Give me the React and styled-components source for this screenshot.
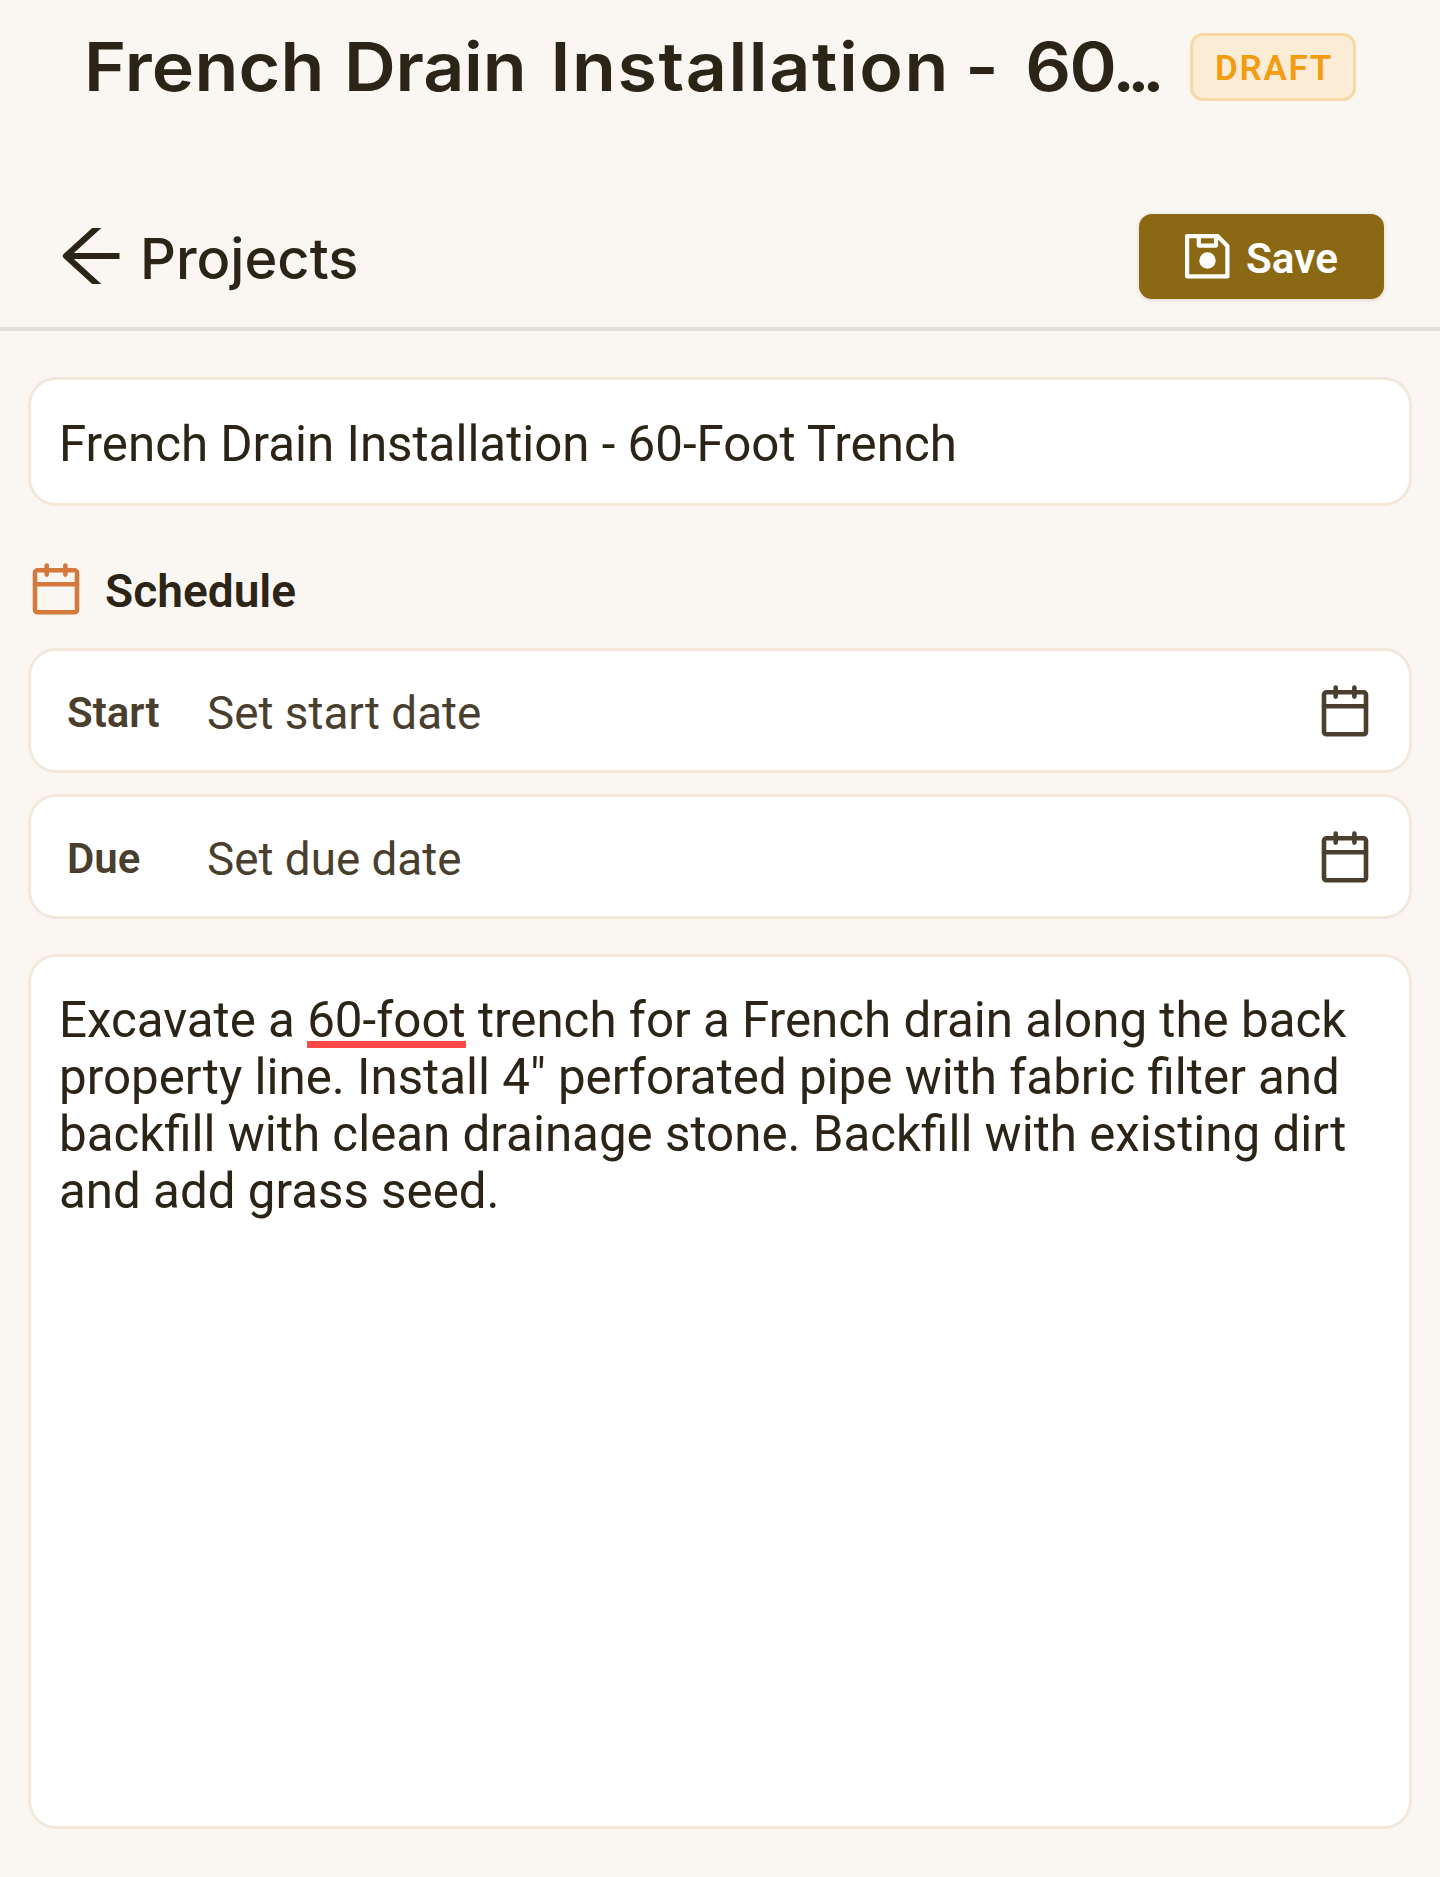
import React from "react";
import styled, { createGlobalStyle } from "styled-components";

const GlobalStyle = createGlobalStyle`
  *, *::before, *::after { box-sizing: border-box; }
  body { margin: 0; background: #faf7f2; }
`;

const Screen = styled.main`
  display: flex;
  flex-direction: column;
  width: 1440px;
  height: 1877px;
  overflow: hidden;
  background: #faf7f2;
  color: #2c2416;
  font-family: Roboto, "Liberation Sans", sans-serif;
`;

const TitleBar = styled.header`
  display: flex;
  align-items: center;
  justify-content: space-between;
  height: 134px;
  padding: 0 84px 0 84px;
`;

const Title = styled.h1`
  display: flex;
  margin: 0;
  font: 600 67px/80px Inter, sans-serif;
  white-space: pre;
  transform: scaleX(1.07);
  transform-origin: 0 50%;
`;

const Word = styled.span`
  width: ${(p) => p.$width}px;
  letter-spacing: ${(p) => p.$tracking}px;
  word-spacing: ${(p) => p.$gap || 0}px;
`;

const Badge = styled.span`
  display: flex;
  align-items: center;
  justify-content: center;
  width: 166px;
  height: 68px;
  padding: 3px 0 0 2px;
  border: 3px solid #f7d9a6;
  border-radius: 13px;
  background: #faecd5;
  color: #f39c12;
  font-size: 35px;
  font-weight: 600;
  line-height: 40px;
  letter-spacing: 1.7px;
`;

const NavBar = styled.nav`
  display: flex;
  align-items: center;
  justify-content: space-between;
  height: 197px;
  padding: 49px 56px 0 62px;
  border-bottom: 4px solid #e2dfd9;
`;

const BackLink = styled.div`
  display: flex;
  align-items: center;
  gap: 20px;
  padding-top: 1px;
  font: 500 56px/66px Inter, sans-serif;
  span { padding-top: 6px; }
`;

const SaveButton = styled.button`
  display: flex;
  align-items: center;
  gap: 16px;
  width: 245px;
  height: 85px;
  margin-top: 3px;
  padding: 0 0 0 46px;
  border: 0;
  border-radius: 13px;
  background: #8b6914;
  box-shadow: 0 1px 5px rgba(70, 50, 20, 0.18);
  color: #fff;
  font: 600 42.3px/50px Roboto, sans-serif;
  span { padding-top: 4px; }
`;

const Form = styled.section`
  display: flex;
  flex-direction: column;
  padding: 46px 28px 0;
`;

const Field = styled.div`
  display: flex;
  align-items: center;
  height: ${(p) => p.$height}px;
  padding: ${(p) => p.$padding};
  margin-bottom: ${(p) => p.$after || 0}px;
  border: 3px solid #f3e8da;
  border-radius: 28px;
  background: #fff;
`;

const NameText = styled.span`
  font-size: 49.25px;
  line-height: 57px;
  white-space: nowrap;
`;

const SectionHeading = styled.h2`
  display: flex;
  align-items: center;
  gap: 25px;
  height: 52px;
  margin: 57px 0 33px;
  padding-left: 4px;
  font-size: 46.1px;
  font-weight: 600;
  line-height: 54px;
  span { padding-top: 4px; }
`;

const FieldLabel = styled.span`
  width: 140px;
  padding-top: 4px;
  color: #4a3f2f;
  font-size: 42px;
  font-weight: 600;
  line-height: 50px;
`;

const FieldValue = styled.span`
  flex: 1;
  padding-top: 6px;
  color: #4a3f2f;
  font-size: 45.8px;
  line-height: 54px;
`;

const Description = styled.div`
  height: 875px;
  padding: 35px 28px;
  border: 3px solid #f3e8da;
  border-radius: 28px;
  background: #fff;
  font-size: 49.3px;
  line-height: 57px;
`;

const Line = styled.div`
  white-space: pre;
`;

const Misspelled = styled.span`
  background: linear-gradient(#ff4845, #ff4845) 0 calc(100% - 1.5px) / 100% 7px no-repeat;
`;

const Icon = styled.svg`
  display: block;
  flex: none;
  fill: none;
  stroke: currentColor;
`;

const ArrowLeft = () => (
  <Icon width="58" height="56" viewBox="0 0 58 56" strokeWidth="6.2">
    <path d="M3.5 28H57.5M37 -2L4 28L37 58" strokeLinejoin="round" />
  </Icon>
);

const SaveIcon = () => (
  <Icon width="45" height="45" viewBox="0 0 45 45" strokeWidth="4.2" strokeLinejoin="round">
    <path d="M2.1 2.1H32.5L42.4 12V42.4H2.1ZM13.8 2.1V11.6H31V2.1" />
    <circle cx="22.5" cy="26.5" r="8.2" fill="currentColor" stroke="none" />
  </Icon>
);

const CalendarIcon = ({ color }) => (
  <Icon width="48" height="52" viewBox="0 0 48 52" strokeWidth="4.6" strokeLinecap="round" color={color}>
    <rect x="3" y="7.3" width="42" height="42" rx="2.4" />
    <path d="M3 21.3H45M14.7 2.5V11.6M33.4 2.5V11.6" />
  </Icon>
);

const words = [
  { text: "French ", width: 243, tracking: 0.2 },
  { text: "Drain ", width: 193, tracking: -0.2 },
  { text: "Installation ", width: 387.5, tracking: 1.5 },
  { text: "- 60", width: 137.5, tracking: -1.5, gap: 11 },
  { text: "...", width: 46, tracking: -7.5 },
];

export default function App() {
  return (
    <Screen>
      <GlobalStyle />
      <TitleBar>
        <Title>
          {words.map((w) => (
            <Word key={w.text} $width={w.width} $tracking={w.tracking} $gap={w.gap}>{w.text}</Word>
          ))}
        </Title>
        <Badge>DRAFT</Badge>
      </TitleBar>
      <NavBar>
        <BackLink><ArrowLeft /><span>Projects</span></BackLink>
        <SaveButton><SaveIcon /><span>Save</span></SaveButton>
      </NavBar>
      <Form>
        <Field $height={129} $padding="5px 28px 0">
          <NameText>French Drain Installation - 60-Foot Trench</NameText>
        </Field>
        <SectionHeading>
          <CalendarIcon color="#d4783c" />
          <span>Schedule</span>
        </SectionHeading>
        <Field $height={125} $padding="0 40px 0 36px" $after={21}>
          <FieldLabel>Start</FieldLabel>
          <FieldValue>Set start date</FieldValue>
          <CalendarIcon color="#4a3f2f" />
        </Field>
        <Field $height={125} $padding="0 40px 0 36px" $after={35}>
          <FieldLabel>Due</FieldLabel>
          <FieldValue>Set due date</FieldValue>
          <CalendarIcon color="#4a3f2f" />
        </Field>
        <Description>
          <Line>Excavate a <Misspelled>60-foot</Misspelled> trench for a French drain along the back</Line>
          <Line>property line. Install 4" perforated pipe with fabric filter and</Line>
          <Line>backfill with clean drainage stone. Backfill with existing dirt</Line>
          <Line>and add grass seed.</Line>
        </Description>
      </Form>
    </Screen>
  );
}
